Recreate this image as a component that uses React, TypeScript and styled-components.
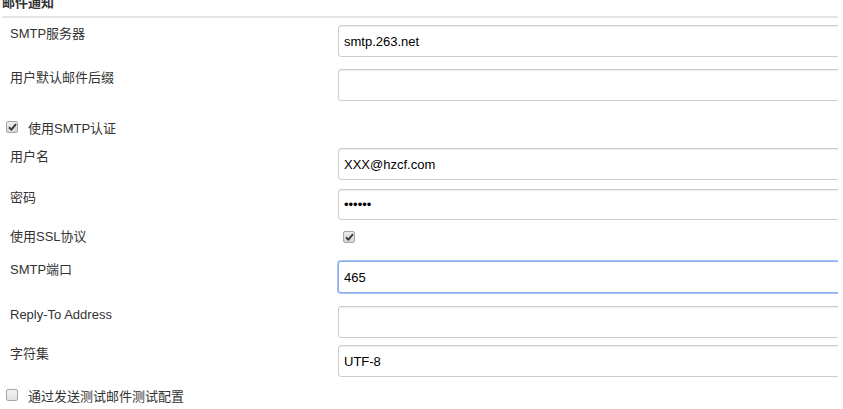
import React from 'react';
import styled, { createGlobalStyle, css } from 'styled-components';

const GlobalStyle = createGlobalStyle`
  html, body {
    margin: 0;
    padding: 0;
    background: #fff;
    overflow: hidden;
  }
  body {
    font-family: "Liberation Sans", Arial, "Noto Sans CJK SC", sans-serif;
    color: #333;
  }
`;

const Page = styled.div`
  width: 838px;
  height: 409px;
  overflow: hidden;
`;

const SectionTitle = styled.div`
  margin: -6px 0 0 2px;
  font-size: 13px;
  line-height: 17px;
  font-weight: bold;
  color: #333;
`;

const Divider = styled.div`
  margin: 5px 0 0 2px;
  height: 2px;
  width: 850px;
  background: #e4e4e4;
`;

const Row = styled.div<{ $top: number }>`
  display: flex;
  align-items: flex-start;
  margin-top: ${({ $top }) => $top}px;
`;

const Label = styled.div<{ $center?: boolean }>`
  width: 328px;
  flex: none;
  padding-left: 10px;
  font-size: 13px;
  line-height: 17px;
  color: #333;
  ${({ $center }) =>
    $center &&
    css`
      line-height: 18px;
    `};
`;

const Field = styled.div<{ $inset?: number }>`
  flex: 1;
  min-width: 0;
  display: flex;
  align-items: center;
  padding-left: ${({ $inset }) => $inset ?? 0}px;
`;

const TextInput = styled.input<{ $focused?: boolean; $h?: number }>`
  box-sizing: border-box;
  flex: none;
  width: 530px;
  height: ${({ $h }) => $h ?? 32}px;
  padding: 0 5px;
  border: 1px solid #ccc;
  border-radius: 3px;
  box-shadow: inset 0 1px 1px rgba(0, 0, 0, 0.075);
  font-family: "Liberation Sans", Arial, "Noto Sans CJK SC", sans-serif;
  font-size: 13px;
  color: #000;
  background: #fff;
  outline: none;
  ${({ $focused }) =>
    $focused &&
    css`
      border-color: #8eaef0;
      box-shadow: 0 0 0 1px #a9c3f5;
    `};
`;

const CheckRow = styled.label`
  display: flex;
  align-items: center;
  gap: 10px;
  padding-left: 6px;
  height: 18px;
  font-size: 13px;
  color: #333;
`;

const Box = styled.span<{ $checked?: boolean }>`
  box-sizing: border-box;
  width: 12px;
  height: 12px;
  flex: none;
  display: flex;
  align-items: center;
  justify-content: center;
  border: 1px solid #a7a7a7;
  border-radius: 2px;
  background: ${({ $checked }) =>
    $checked
      ? 'linear-gradient(#ececec, #d6d6d6)'
      : 'linear-gradient(#f2f2f2, #e2e2e2)'};
`;

function Checkbox({ checked }: { checked?: boolean }) {
  return (
    <Box $checked={checked}>
      {checked && (
        <svg width='9' height='8' viewBox='0 0 9 8'>
          <path
            d='M1 4.3 L3.4 6.6 L8 1.2'
            fill='none'
            stroke='#3a3a3a'
            strokeWidth='1.9'
          />
        </svg>
      )}
    </Box>
  );
}

export default function App() {
  return (
    <Page>
      <GlobalStyle />
      <SectionTitle>邮件通知</SectionTitle>
      <Divider />

      <Row $top={7}>
        <Label>SMTP服务器</Label>
        <Field>
          <TextInput defaultValue='smtp.263.net' />
        </Field>
      </Row>

      <Row $top={12}>
        <Label>用户默认邮件后缀</Label>
        <Field>
          <TextInput defaultValue='' />
        </Field>
      </Row>

      <Row $top={17}>
        <CheckRow>
          <Checkbox checked />
          使用SMTP认证
        </CheckRow>
      </Row>

      <Row $top={12}>
        <Label>用户名</Label>
        <Field>
          <TextInput defaultValue='XXX@hzcf.com' />
        </Field>
      </Row>

      <Row $top={9}>
        <Label>密码</Label>
        <Field>
          <TextInput type='password' defaultValue='123456' $h={31} />
        </Field>
      </Row>

      <Row $top={8}>
        <Label $center>使用SSL协议</Label>
        <Field $inset={5} style={{ height: 18 }}>
          <Checkbox checked />
        </Field>
      </Row>

      <Row $top={15}>
        <Label>SMTP端口</Label>
        <Field>
          <TextInput defaultValue='465' $focused />
        </Field>
      </Row>

      <Row $top={13}>
        <Label>Reply-To Address</Label>
        <Field>
          <TextInput defaultValue='' />
        </Field>
      </Row>

      <Row $top={7}>
        <Label>字符集</Label>
        <Field>
          <TextInput defaultValue='UTF-8' />
        </Field>
      </Row>

      <Row $top={9}>
        <CheckRow>
          <Checkbox />
          通过发送测试邮件测试配置
        </CheckRow>
      </Row>
    </Page>
  );
}
